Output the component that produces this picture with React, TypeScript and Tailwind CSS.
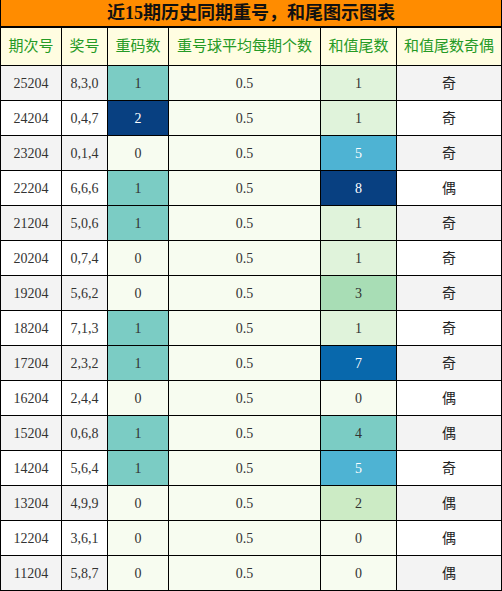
import React from "react";

interface DrawRow {
  issue: string;
  balls: string;
  repeat: number;
  avg: string;
  tail: number;
}

const rows: DrawRow[] = [
  { issue: "25204", balls: "8,3,0", repeat: 1, avg: "0.5", tail: 1 },
  { issue: "24204", balls: "0,4,7", repeat: 2, avg: "0.5", tail: 1 },
  { issue: "23204", balls: "0,1,4", repeat: 0, avg: "0.5", tail: 5 },
  { issue: "22204", balls: "6,6,6", repeat: 1, avg: "0.5", tail: 8 },
  { issue: "21204", balls: "5,0,6", repeat: 1, avg: "0.5", tail: 1 },
  { issue: "20204", balls: "0,7,4", repeat: 0, avg: "0.5", tail: 1 },
  { issue: "19204", balls: "5,6,2", repeat: 0, avg: "0.5", tail: 3 },
  { issue: "18204", balls: "7,1,3", repeat: 1, avg: "0.5", tail: 1 },
  { issue: "17204", balls: "2,3,2", repeat: 1, avg: "0.5", tail: 7 },
  { issue: "16204", balls: "2,4,4", repeat: 0, avg: "0.5", tail: 0 },
  { issue: "15204", balls: "0,6,8", repeat: 1, avg: "0.5", tail: 4 },
  { issue: "14204", balls: "5,6,4", repeat: 1, avg: "0.5", tail: 5 },
  { issue: "13204", balls: "4,9,9", repeat: 0, avg: "0.5", tail: 2 },
  { issue: "12204", balls: "3,6,1", repeat: 0, avg: "0.5", tail: 0 },
  { issue: "11204", balls: "5,8,7", repeat: 0, avg: "0.5", tail: 0 },
];

// GnBu scale, 0..8
const tailColors = [
  "bg-[#f7fcf0] text-[#333]",
  "bg-[#e0f3db] text-[#333]",
  "bg-[#ccebc5] text-[#333]",
  "bg-[#a8ddb5] text-[#333]",
  "bg-[#7bccc4] text-[#333]",
  "bg-[#4eb3d3] text-white",
  "bg-[#2b8cbe] text-white",
  "bg-[#0868ac] text-white",
  "bg-[#084081] text-white",
  "bg-[#084081] text-white",
];

const repeatColors = [
  "bg-[#f7fcf0] text-[#333]",
  "bg-[#7bccc4] text-[#333]",
  "bg-[#084081] text-white",
];

const headers = ["期次号", "奖号", "重码数", "重号球平均每期个数", "和值尾数", "和值尾数奇偶"];

const cell = "flex items-center justify-center";

export default function App() {
  return (
    <div
      className="w-[502px] bg-black px-px pb-px"
      style={{ fontFamily: '"Liberation Serif", "Noto Sans CJK SC", serif' }}
    >
      <div className="h-[26px] bg-[#ff8c00] flex items-center justify-center text-[18px] font-bold text-[#111] leading-none">
        近15期历史同期重号，和尾图示图表
      </div>

      <div className="mt-[2px] grid grid-cols-[60px_45px_60px_151px_75px_104px] gap-px">
        {headers.map((h) => (
          <div
            key={h}
            className={`${cell} h-[37px] bg-[#fffde1] text-[15px] text-[#259a25]`}
          >
            {h}
          </div>
        ))}

        {rows.map((r, i) => {
          const stripe = i % 2 === 0 ? "bg-[#f3f3f3]" : "bg-white";
          return (
            <React.Fragment key={r.issue}>
              <div className={`${cell} h-[34px] ${stripe} text-[14px] text-[#333]`}>{r.issue}</div>
              <div className={`${cell} h-[34px] ${stripe} text-[14px] text-[#333]`}>{r.balls}</div>
              <div className={`${cell} h-[34px] text-[14px] ${repeatColors[r.repeat]}`}>{r.repeat}</div>
              <div className={`${cell} h-[34px] bg-[#f7fcf0] text-[14px] text-[#333]`}>{r.avg}</div>
              <div className={`${cell} h-[34px] text-[14px] ${tailColors[r.tail]}`}>{r.tail}</div>
              <div className={`${cell} h-[34px] ${stripe} text-[14px] text-[#222]`}>
                {r.tail % 2 === 0 ? "偶" : "奇"}
              </div>
            </React.Fragment>
          );
        })}
      </div>
    </div>
  );
}
